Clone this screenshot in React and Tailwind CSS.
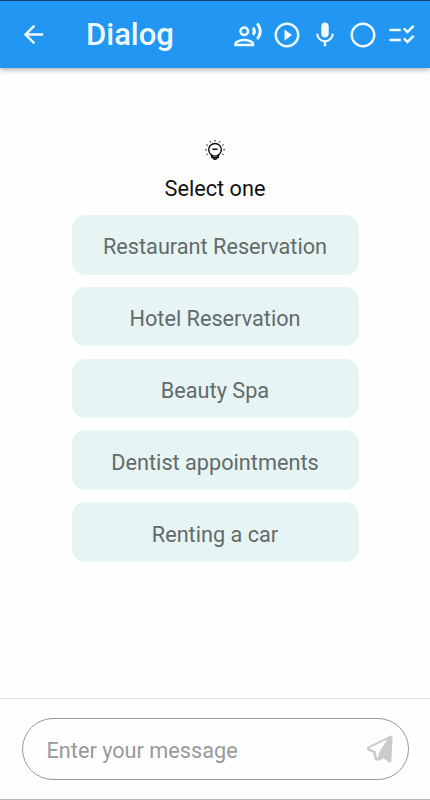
import {
  MdArrowBack,
  MdChecklistRtl,
  MdMic,
  MdOutlineRecordVoiceOver,
  MdPlayCircleOutline,
  MdRadioButtonUnchecked,
} from "react-icons/md";

const ACTIONS = [
  { label: "Speak", icon: MdOutlineRecordVoiceOver },
  { label: "Play", icon: MdPlayCircleOutline },
  { label: "Microphone", icon: MdMic },
  { label: "Record", icon: MdRadioButtonUnchecked },
  { label: "Checklist", icon: MdChecklistRtl },
];

const OPTIONS = [
  "Restaurant Reservation",
  "Hotel Reservation",
  "Beauty Spa",
  "Dentist appointments",
  "Renting a car",
];

const BulbIcon = () => (
  <svg width="22" height="22" viewBox="0 0 22 22" fill="none" stroke="#111" strokeLinecap="round">
    <circle cx="11" cy="10.8" r="6.3" strokeWidth="1.4" />
    <path d="M8.9 10.3h4.2" strokeWidth="1.4" />
    <path d="M7.6 16.2v2l2 1.2.6 1h1.6l.6-1 2-1.2v-2" strokeWidth="1.4" strokeLinejoin="round" />
    <path d="M8 18q3 1.4 6 0" strokeWidth="1.5" />
    {/* Rays */}
    <path
      d="M11 1.3v.8M6.2 2.5l.4.8M15.8 2.5l-.4.8M2.7 5.8l.8.5M19.3 5.8l-.8.5M1.4 10.8h.9M20.6 10.8h-.9M2.7 15.6l.8-.5M19.3 15.6l-.8-.5"
      strokeWidth="1"
    />
  </svg>
);

const SendIcon = () => (
  <svg width="28" height="30" viewBox="0 0 28 30" fill="#cbcbcb">
    <path
      fillRule="evenodd"
      d="M25 1.6 1.3 12.9Q.2 13.8 1 15.2L1.8 16.8 7.2 18.8 8.6 25.2Q9.2 26.8 11 26.6L13.6 26.6 17.6 24.2 22.6 28.2Q24.8 29.2 25.4 27.4L26.6 2.6Q26.4 1 25 1.6ZM21.6 5.2 3.6 13.9 3.8 14.7 9.6 16.9 11 23.7 11.8 24 13.2 17.8Z"
    />
  </svg>
);

const Header = () => (
  <header className="flex h-[68px] shrink-0 items-center border-t border-[#12406b] bg-[#2196f3] pl-[19px] pr-[13.5px] text-[#effaff] shadow-[0_2px_5px_rgba(0,0,0,0.3)]">
    <button aria-label="Back">
      <MdArrowBack size={29} />
    </button>
    <h1 className="ml-[38px] text-[31px] leading-none font-medium">Dialog</h1>
    <div className="ml-auto flex gap-[8.3px]">
      {ACTIONS.map(({ label, icon: Icon }) => (
        <button key={label} aria-label={label}>
          <Icon size={30} />
        </button>
      ))}
    </div>
  </header>
);

export default function App() {
  return (
    <div className="flex h-screen flex-col bg-[#fefefe] font-[Roboto,sans-serif]">
      <Header />

      <main className="flex flex-1 flex-col items-center pt-[71px]">
        <BulbIcon />
        <p className="mt-[13px] text-[21.7px] leading-[30px] text-[#111]">Select one</p>
        <div className="mt-[11px] flex w-[287px] flex-col gap-[12.3px]">
          {OPTIONS.map((option) => (
            <button
              key={option}
              className="h-[59.5px] rounded-[14px] bg-[#e6f4f4] pt-[6px] text-[21.7px] text-[#626b6a]"
            >
              {option}
            </button>
          ))}
        </div>
      </main>

      {/* Message composer */}
      <footer className="h-[102px] shrink-0 border-t border-b border-t-[#e0e0e0] border-b-[#b5b5b5] px-[21.5px] pt-[19px]">
        <div className="flex h-[62px] items-center rounded-full border border-[#999] pl-6 pr-[14px]">
          <span className="pt-[4.5px] text-[21.7px] text-[#999]">Enter your message</span>
          <button aria-label="Send" className="ml-auto">
            <SendIcon />
          </button>
        </div>
      </footer>
    </div>
  );
}
